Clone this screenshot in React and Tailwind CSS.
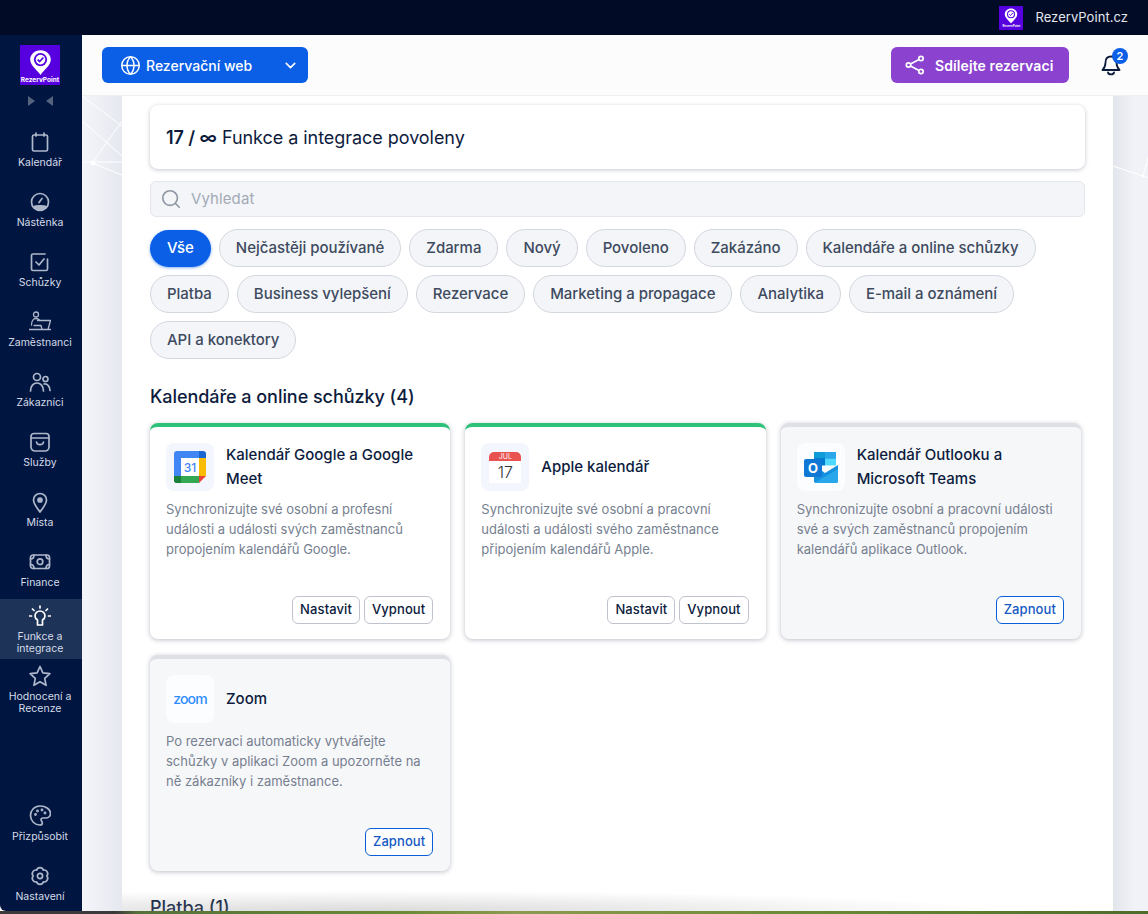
import { ChevronDown, Globe, Search } from "lucide-react";

const font = "font-['Inter','Noto_Sans',sans-serif]";

function LogoMark({ small }) {
  return (
    <div
      className={
        small
          ? "flex h-6 w-6 flex-col items-center bg-[#5600e0]"
          : "flex h-10 w-10 flex-col items-center bg-[#5600e0]"
      }
    >
      <svg viewBox="0 0 40 32" className={small ? "mt-[2px] h-[16px] w-[20px]" : "mt-[4px] h-[27px] w-[33px]"}>
        <path d="M20 1c-7 0-12.500 5-12.500 11.500 0 7 7.500 12 12.500 18.500 5-6.500 12.500-11.500 12.500-18.500C32.500 6 27 1 20 1z" fill="#fff" />
        <circle cx="20" cy="12.500" r="8" fill="#5600e0" />
        <circle cx="20" cy="12.500" r="5.800" fill="#fff" />
        <path d="M16.500 12.500l2.500 2.500 4.500-5" fill="none" stroke="#5600e0" strokeWidth="2" />
      </svg>
      <span
        className={
          small
            ? "text-[3px] leading-[4px] font-bold text-white"
            : "text-[6.500px] leading-[8px] font-bold whitespace-nowrap text-white"
        }
      >
        RezervPoint
      </span>
    </div>
  );
}

const strokeProps = {
  fill: "none",
  stroke: "#aeb7ca",
  strokeWidth: 1.7,
  strokeLinecap: "round",
  strokeLinejoin: "round",
};

const navIcons = {
  calendar: (
    <g {...strokeProps}>
      <rect x="3.500" y="4" width="15" height="16" rx="1.500" />
      <path d="M7 2v3M15 2v3" />
    </g>
  ),
  gauge: (
    <g {...strokeProps}>
      <circle cx="11" cy="11" r="8.500" />
      <path d="M4.500 16c2-1.500 11-1.500 13 0-2 3-11 3-13 0z" fill="#aeb7ca" />
      <path d="M10 11.500l3-4" />
    </g>
  ),
  check: (
    <g {...strokeProps}>
      <path d="M18.500 8v10a1.500 1.500 0 0 1-1.500 1.500H4A1.500 1.500 0 0 1 2.500 18V4.500A1.500 1.500 0 0 1 4 3h12" />
      <path d="M7 11l3 3 5-6" />
    </g>
  ),
  staff: (
    <g {...strokeProps} strokeWidth="1.300">
      <circle cx="7" cy="3.500" r="2.500" />
      <path d="M2.500 14c0-4 1.800-6.500 4.500-6.500 1.500 0 2.500.5 3.500 1.500M8.500 9.500h13l-2.500 9M5 14.500h7l1 4M.5 18.500h21" />
    </g>
  ),
  people: (
    <g {...strokeProps}>
      <circle cx="8" cy="6" r="3.500" />
      <circle cx="16.500" cy="8" r="2.500" />
      <path d="M1.500 20c0-5 3-8 6.500-8s6.500 3 6.500 8M15 13c3.500-.5 6 2.500 6 6.500" />
    </g>
  ),
  bag: (
    <g {...strokeProps}>
      <path d="M5 2.500h12a3 3 0 0 1 3 3V16a4 4 0 0 1-4 4H6a4 4 0 0 1-4-4V5.500a3 3 0 0 1 3-3z" />
      <path d="M2.500 7h17M7.500 11c.5 3.500 6.500 3.500 7 0" />
    </g>
  ),
  pin: (
    <g {...strokeProps}>
      <path d="M11 21c-3-4.500-6.500-8-6.500-12a6.500 6.500 0 0 1 13 0c0 4-3.500 7.500-6.500 12z" />
      <circle cx="11" cy="9" r="2" fill="#aeb7ca" />
    </g>
  ),
  money: (
    <g {...strokeProps}>
      <rect x="1.500" y="4" width="19" height="13.500" rx="2.500" />
      <circle cx="11" cy="10.700" r="2.800" />
      <path d="M1.500 8c2 0 3.500-1.500 3.500-4M20.500 8c-2 0-3.500-1.500-3.500-4M1.500 13.500c2 0 3.500 1.500 3.500 4M20.500 13.500c-2 0-3.500 1.500-3.500 4" />
    </g>
  ),
  bulb: (
    <g fill="none" stroke="#fff" strokeWidth="1.700" strokeLinecap="round" strokeLinejoin="round">
      <path d="M8.500 20h5v-5c1.500-1 2.500-2.200 2.500-4a5 5 0 0 0-10 0c0 1.800 1 3 2.500 4z" />
      <path d="M11 1v2M3.500 4l1.500 1.500M18.500 4L17 5.500M.5 11h2M19.500 11h2" />
    </g>
  ),
  star: (
    <g {...strokeProps}>
      <path d="M11 1.500l2.900 6.400 7 .8-5.200 4.700 1.400 6.900L11 16.800l-6.100 3.500 1.400-6.900L1.100 8.700l7-.8z" />
    </g>
  ),
  palette: (
    <g {...strokeProps}>
      <path d="M11 1c-5.500 0-9.500 4.200-9.500 9.500S5.700 20 11 20c1.500 0 2.300-1 2.300-2 0-1.700-1.300-2-1.300-3.300 0-1 .8-1.700 2-1.700h2.500c3 0 5-2 5-4.500C21.500 4.500 17 1 11 1z" />
      <circle cx="6.500" cy="9.500" r=".6" />
      <circle cx="8.500" cy="6" r=".6" />
      <circle cx="13" cy="5" r=".6" />
      <circle cx="16" cy="8" r=".6" />
    </g>
  ),
  gear: (
    <g {...strokeProps}>
      <path d="M7.600 5.100A3.600 3.600 0 0 1 14.400 5.100A3.600 3.600 0 0 1 17.800 11A3.600 3.600 0 0 1 14.400 16.900A3.600 3.600 0 0 1 7.600 16.900A3.600 3.600 0 0 1 4.200 11A3.600 3.600 0 0 1 7.600 5.100z" />
      <circle cx="11" cy="11" r="2.600" />
    </g>
  ),
};

function NavItem({ icon, label, active, twoLine, bottom }) {
  return (
    <div
      className={
        active
          ? "flex h-[60px] flex-col items-center justify-start bg-[#1d3358] pt-[6px] pr-[2px]"
          : twoLine
            ? "flex h-[60px] flex-col items-center justify-start pt-[6px] pr-[2px]"
            : bottom
              ? "flex h-[60px] flex-col items-center justify-start pt-[13px] pr-[2px]"
              : "flex h-[60px] flex-col items-center justify-start pt-[12px] pr-[2px]"
      }
    >
      <svg viewBox="0 0 22 22" className="h-[22px] w-[22px] shrink-0">
        {navIcons[icon]}
      </svg>
      <span className="mt-[4px] w-[80px] text-center text-[10.500px] leading-[12px] text-[#d5dbe8]">{label}</span>
    </div>
  );
}

function Sidebar() {
  return (
    <aside className="flex h-full w-[82px] shrink-0 flex-col rounded-bl-[6px] bg-[#001640]">
      <div className="flex justify-center pt-[10px] pr-[2px]">
        <LogoMark />
      </div>
      <div className="mt-[11px] flex h-[10px] justify-center gap-[11px] pr-[2px]">
        <svg viewBox="0 0 7 10" className="h-[10px] w-[7px]">
          <path d="M0 0l7 5-7 5z" fill="#56637f" />
        </svg>
        <svg viewBox="0 0 7 10" className="h-[10px] w-[7px]">
          <path d="M7 0L0 5l7 5z" fill="#56637f" />
        </svg>
      </div>
      <div className="mt-[13px] flex flex-col">
        <NavItem icon="calendar" label="Kalendář" />
        <NavItem icon="gauge" label="Nástěnka" />
        <NavItem icon="check" label="Schůzky" />
        <NavItem icon="staff" label="Zaměstnanci" />
        <NavItem icon="people" label="Zákazníci" />
        <NavItem icon="bag" label="Služby" />
        <NavItem icon="pin" label="Místa" />
        <NavItem icon="money" label="Finance" />
        <NavItem icon="bulb" label="Funkce a integrace" active />
        <NavItem icon="star" label="Hodnocení a Recenze" twoLine />
      </div>
      <div className="mt-auto mb-[-1px] flex flex-col">
        <NavItem icon="palette" label="Přizpůsobit" bottom />
        <NavItem icon="gear" label="Nastavení" bottom />
      </div>
    </aside>
  );
}

function GoogleLogo() {
  return (
    <svg viewBox="0 0 32 32" className="h-[32px] w-[32px]">
      <path d="M3 0h22v7H7v18H0V3a3 3 0 0 1 3-3z" fill="#4285f4" />
      <path d="M25 0h4a3 3 0 0 1 3 3v4h-7z" fill="#1967d2" />
      <rect x="25" y="7" width="7" height="18" fill="#fbbc04" />
      <path d="M7 25h18v7H3a3 3 0 0 1-3-3v-4h7z" fill="#34a853" />
      <path d="M0 25h7v7H3a3 3 0 0 1-3-3z" fill="#188038" />
      <path d="M25 25h7l-7 7z" fill="#ea4335" />
      <rect x="7" y="7" width="18" height="18" fill="#fff" />
      <text x="16" y="21" textAnchor="middle" fontSize="12" fontFamily="Inter, sans-serif" fontWeight="500" fill="#4285f4">
        31
      </text>
    </svg>
  );
}

function AppleLogo() {
  return (
    <div className="flex w-[32px] flex-col overflow-hidden rounded-t-[5px] bg-white">
      <div className="h-[9px] bg-[#e8524f] text-center text-[7px] leading-[9px] text-white">JUL</div>
      <div className="h-[22px] text-center text-[16px] leading-[22px] font-light text-[#333]">17</div>
    </div>
  );
}

function OutlookLogo() {
  return (
    <svg viewBox="0 0 34 32" className="h-[32px] w-[34px]">
      <rect x="10" y="1" width="22" height="13" fill="#0f6cbd" />
      <rect x="10" y="1" width="11" height="6.500" fill="#0f9bd7" />
      <rect x="21" y="1" width="11" height="6.500" fill="#28a8ea" />
      <rect x="10" y="7.500" width="11" height="7" fill="#0078d4" />
      <rect x="21" y="7.500" width="11" height="7" fill="#50d9ff" />
      <path d="M10 14l11 8 13-8v16a2 2 0 0 1-2 2H12a2 2 0 0 1-2-2z" fill="#1490df" />
      <path d="M10 32l24-14v12a2 2 0 0 1-2 2z" fill="#28a8ea" />
      <rect x="0" y="8" width="18" height="18" rx="2" fill="#0f78d4" />
      <text x="9" y="21.500" textAnchor="middle" fontSize="13" fontFamily="Inter, sans-serif" fontWeight="700" fill="#fff">
        O
      </text>
    </svg>
  );
}

function ZoomLogo() {
  return (
    <span className="text-[14px] leading-none font-medium tracking-[-0.9px] text-[#2d8cff]">zoom</span>
  );
}

function IntegrationCard({ logo, title, text, enabled }) {
  return (
    <div
      className={
        enabled
          ? "flex h-[216px] flex-col rounded-[8px] border-t-[4px] border-[#2cc279] bg-white pt-4 pr-[17px] pb-[15px] pl-4 shadow-[0_1px_5px_rgba(20,30,60,0.28)]"
          : "flex h-[216px] flex-col rounded-[8px] border-t-[4px] border-[#dfe0e6] bg-[#f6f7f9] pt-4 pr-[17px] pb-[15px] pl-4 shadow-[0_1px_5px_rgba(20,30,60,0.28)]"
      }
    >
      <div className="flex items-center gap-3">
        <div
          className={
            enabled
              ? "flex h-12 w-12 shrink-0 items-center justify-center rounded-[8px] bg-[#f3f6fc]"
              : "flex h-12 w-12 shrink-0 items-center justify-center rounded-[8px] bg-[#fcfdfe]"
          }
        >
          {logo}
        </div>
        <h3 className="text-[15px] leading-[24px] font-medium text-[#0d1c3d]">{title}</h3>
      </div>
      <p className="mt-2 text-[13px] leading-[20px] text-[#767f90]">{text}</p>
      <div className="mt-auto flex justify-end gap-1">
        {enabled ? (
          <>
            <CardButton label="Nastavit" />
            <CardButton label="Vypnout" />
          </>
        ) : (
          <button className="h-[28px] rounded-[6px] border border-[#0a5fd8] bg-white px-[7px] text-[13px] font-medium tracking-[0.1px] text-[#1559c4]">
            Zapnout
          </button>
        )}
      </div>
    </div>
  );
}

function CardButton({ label }) {
  return (
    <button className="h-[28px] rounded-[6px] border border-[#bfc3cd] bg-white px-[7px] text-[13px] font-medium tracking-[0.1px] text-[#0d1c3d]">
      {label}
    </button>
  );
}

function Chip({ label, active }) {
  return (
    <span
      className={
        active
          ? "flex h-[37px] items-center rounded-full bg-[#0a5fe6] px-[17px] text-[15px] font-medium text-white shadow-[0_1px_3px_rgba(10,95,230,0.5)]"
          : "flex h-[38px] items-center rounded-full border border-[#d3d7de] bg-[#f3f5f9] px-4 text-[15px] font-medium tracking-[-0.03px] text-[#3e4a5e]"
      }
    >
      {label}
    </span>
  );
}

const chips = [
  "Nejčastěji používané",
  "Zdarma",
  "Nový",
  "Povoleno",
  "Zakázáno",
  "Kalendáře a online schůzky",
  "Platba",
  "Business vylepšení",
  "Rezervace",
  "Marketing a propagace",
  "Analytika",
  "E-mail a oznámení",
  "API a konektory",
];

function Gutter({ right }) {
  return (
    <div
      className={
        right
          ? "h-full w-[35px] shrink-0 bg-[linear-gradient(to_right,#e2e5ec,#f1f2f7_60%)]"
          : "h-full w-[40px] shrink-0 bg-[linear-gradient(to_right,#f4f5f9,#e6e8f0)]"
      }
    >
      {/* faint network lines of the page background */}
      {right ? (
        <svg viewBox="0 0 35 100" className="h-[100px] w-[35px]">
          <path d="M0 70l30 10 5-18M30 80l5 2" fill="none" stroke="#fff" strokeWidth="1" />
          <circle cx="30" cy="80" r="1.500" fill="#fff" />
        </svg>
      ) : (
        <svg viewBox="0 0 40 100" className="h-[100px] w-[40px]">
          <path d="M0 0l40 30M0 25l40 35M0 66h40M10 67l30 -42M10 67l30 12" fill="none" stroke="#fff" strokeWidth="1" />
          <circle cx="11" cy="67" r="2.500" fill="#fff" />
        </svg>
      )}
    </div>
  );
}

export default function App() {
  return (
    <div className={`${font} flex h-screen w-full flex-col overflow-hidden bg-white`}>
      <div className="flex h-[35px] shrink-0 items-center justify-end bg-[#020b26] pr-5">
        <LogoMark small />
        <span className="ml-3 text-[13px] tracking-[0.05px] text-[#e4e7ee]">RezervPoint.cz</span>
      </div>

      <div className="flex min-h-0 flex-1">
        <Sidebar />
        <div className="flex min-w-0 flex-1 flex-col">
          <header className="flex h-[61px] shrink-0 items-center justify-between border-b border-[#eff0f3] bg-[#fcfcfd] pr-[27px] pl-5">
            <button className="flex h-9 w-[206px] items-center rounded-[6px] bg-[#0a5fe6] pr-[9px] pl-[18px] text-[14px] font-medium text-white">
              <Globe size={21} strokeWidth={1.7} />
              <span className="ml-[5px]">Rezervační web</span>
              <ChevronDown size={17} strokeWidth={2.2} className="mr-0 ml-auto" />
            </button>
            <div className="flex items-center">
              <button className="flex h-9 w-[178px] items-center rounded-[6px] bg-[#8a42cf] pl-[14px] text-[14px] font-semibold tracking-[0.1px] text-white">
                <svg viewBox="0 0 20 20" className="h-5 w-5" fill="none" stroke="#fff" strokeWidth="1.700">
                  <circle cx="3.500" cy="10" r="2.200" />
                  <circle cx="16" cy="3.500" r="2.200" />
                  <circle cx="16" cy="16.500" r="2.200" />
                  <path d="M5.500 9l8.500-4.500M5.500 11l8.500 4.500" />
                </svg>
                <span className="ml-[10px]">Sdílejte rezervaci</span>
              </button>
              <div className="relative ml-[32px] h-6 w-5">
                <svg viewBox="0 0 20 24" className="h-6 w-5" fill="none" stroke="#0d1c3d" strokeWidth="1.800" strokeLinejoin="round">
                  <path d="M10 3.500c-3.500 0-5.500 2.500-5.500 6 0 4-1 5.500-3 7.500h17c-2-2-3-3.500-3-7.500 0-3.500-2-6-5.500-6z" />
                  <path d="M7 19.500c.5 2.500 5.500 2.500 6 0" strokeLinecap="round" />
                </svg>
                <span className="absolute -top-[5px] left-[11px] flex h-4 w-4 items-center justify-center rounded-full bg-[#0a5fe6] text-[11px] font-semibold text-white">
                  2
                </span>
              </div>
            </div>
          </header>

          <div className="flex min-h-0 flex-1">
            <Gutter />
            <main className="relative min-w-0 flex-1 overflow-hidden bg-white px-7 pt-[9px]">
              <div className="flex h-16 w-[935px] items-center rounded-[8px] bg-white px-4 text-[18px] tracking-[-0.05px] text-[#0d1c3d] shadow-[0_1px_4px_rgba(20,30,60,0.25)]">
                <span className="font-semibold">17 / ∞</span>
                <span className="ml-[5px]">Funkce a integrace povoleny</span>
              </div>

              <div className="mt-3 flex h-9 w-[935px] items-center rounded-[6px] border border-[#e3e6ec] bg-[#f3f5f9] pl-[9px]">
                <Search size={22} strokeWidth={1.8} className="text-[#8e96a3]" />
                <span className="ml-[9px] text-[15px] tracking-[0.1px] text-[#a3aab6]">Vyhledat</span>
              </div>

              <div className="mt-3 flex w-[935px] flex-wrap items-center gap-x-2 gap-y-2">
                <Chip label="Vše" active />
                {chips.map((chip) => (
                  <Chip key={chip} label={chip} />
                ))}
              </div>

              <h2 className="mt-[25px] text-[18px] leading-[26px] font-medium tracking-[-0.05px] text-[#0d1c3d]">
                Kalendáře a online schůzky (4)
              </h2>

              <div className="mt-[13px] grid w-[931px] grid-cols-3 gap-x-[15px] gap-y-4">
                <IntegrationCard
                  enabled
                  logo={<GoogleLogo />}
                  title="Kalendář Google a Google Meet"
                  text="Synchronizujte své osobní a profesní události a události svých zaměstnanců propojením kalendářů Google."
                />
                <IntegrationCard
                  enabled
                  logo={<AppleLogo />}
                  title="Apple kalendář"
                  text="Synchronizujte své osobní a pracovní události a události svého zaměstnance připojením kalendářů Apple."
                />
                <IntegrationCard
                  logo={<OutlookLogo />}
                  title="Kalendář Outlooku a Microsoft Teams"
                  text="Synchronizujte osobní a pracovní události své a svých zaměstnanců propojením kalendářů aplikace Outlook."
                />
                <IntegrationCard
                  logo={<ZoomLogo />}
                  title="Zoom"
                  text="Po rezervaci automaticky vytvářejte schůzky v aplikaci Zoom a upozorněte na ně zákazníky i zaměstnance."
                />
              </div>

              <h2 className="mt-[24px] text-[18px] leading-[26px] font-medium text-[#0d1c3d]">Platba (1)</h2>
              <div className="pointer-events-none absolute right-0 bottom-0 left-0 h-6 bg-[radial-gradient(ellipse_at_25%_100%,rgba(150,150,150,0.35),transparent_60%)]" />
            </main>
            <Gutter right />
          </div>
        </div>
      </div>

      <div className="h-[3px] shrink-0 bg-[linear-gradient(to_right,#3a3a3a_0%,#3a3a3a_10%,#56703a_12%,#6b8a35_35%,#8a9a50_45%,#6b8a35_70%,#4f6b2c_100%)]" />
    </div>
  );
}
